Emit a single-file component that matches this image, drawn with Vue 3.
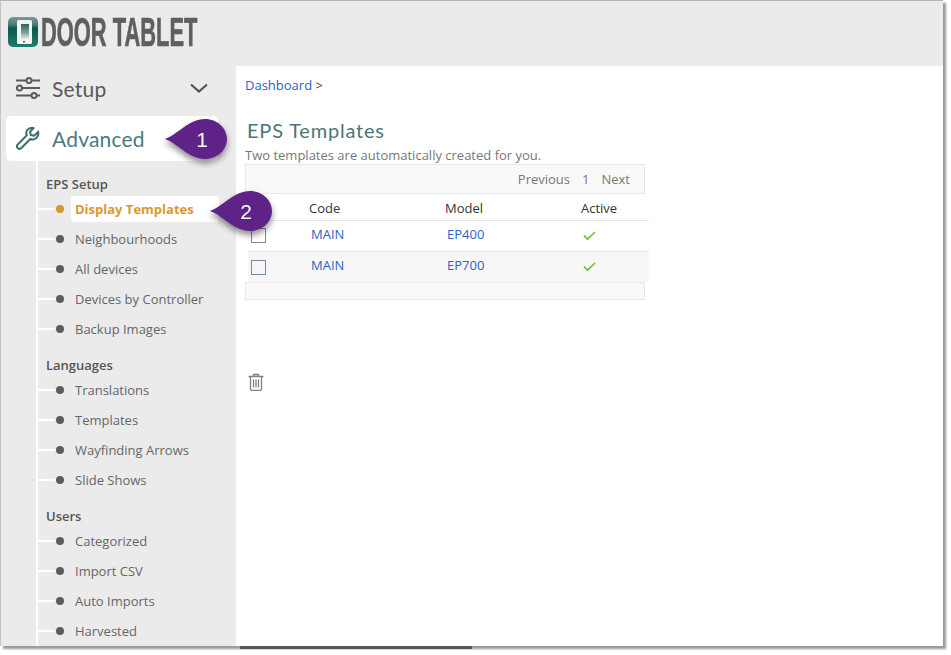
<script setup>
const groups = [
  { title: 'EPS Setup', items: ['Display Templates', 'Neighbourhoods', 'All devices', 'Devices by Controller', 'Backup Images'] },
  { title: 'Languages', items: ['Translations', 'Templates', 'Wayfinding Arrows', 'Slide Shows'] },
  { title: 'Users', items: ['Categorized', 'Import CSV', 'Auto Imports', 'Harvested'] }
]
const rows = [
  { code: 'MAIN', model: 'EP400' },
  { code: 'MAIN', model: 'EP700' }
]
const balloons = [
  { id: 'b1', label: '1' },
  { id: 'b2', label: '2' }
]
</script>

<template>
  <div class="page">
    <div class="window">
      <header class="top">
        <svg class="logo-icon" width="30" height="30" viewBox="0 0 30 30">
          <defs>
            <linearGradient id="lg" x1="0" y1="0" x2="0" y2="1">
              <stop offset="0" stop-color="#7f9a93" />
              <stop offset="0.28" stop-color="#3f7a70" />
              <stop offset="0.36" stop-color="#0e564c" />
              <stop offset="1" stop-color="#1f7d6f" />
            </linearGradient>
            <linearGradient id="lg2" x1="0" y1="0" x2="0" y2="1">
              <stop offset="0" stop-color="#24665c" />
              <stop offset="0.6" stop-color="#7fa69e" />
              <stop offset="1" stop-color="#e4ecea" />
            </linearGradient>
          </defs>
          <rect width="30" height="30" rx="5" fill="url(#lg)" />
          <rect x="9" y="3" width="15" height="24" rx="1.500" fill="#f1f4f0" />
          <rect x="13" y="7" width="8" height="15" fill="url(#lg2)" />
          <rect x="15" y="24" width="2" height="1.500" fill="#3a6f66" />
        </svg>
        <span class="logo-text">DOOR TABLET</span>
      </header>
      <div class="body">
        <aside class="side">
          <div class="nav-top">
            <svg width="24" height="22" viewBox="0 0 24 22" fill="none" stroke="#5a5a5a" stroke-width="2">
              <path d="M0 3.500h10.500M15.500 3.500h8.500M6 11h18M0 11h1M0 18.500h15.500M20.500 18.500h3.500" />
              <circle cx="13" cy="3.500" r="2.500" />
              <circle cx="3.500" cy="11" r="2.500" />
              <circle cx="18" cy="18.500" r="2.500" />
            </svg>
            <span class="nav-label">Setup</span>
            <svg class="chev" width="18" height="10" viewBox="0 0 18 10" fill="none" stroke="#555" stroke-width="2.200">
              <path d="M1 1.500l8 7 8-7" />
            </svg>
          </div>
          <div class="nav-active">
            <svg width="24" height="24" viewBox="0 0 26 26" fill="none" stroke="#3f6f6c" stroke-width="2.200" stroke-linejoin="round">
              <path d="M24 5.500l-4.500 4-3.500-.8-.8-3.500 4-4C15.500.5 11.800 2 11.200 5.500c-.2 1.300 0 2.500.5 3.500L2 18.800c-1.200 1.200-1.200 2.900-.2 4 1.100 1.100 2.900 1 4-.1l9.700-9.700c1 .5 2.200.7 3.500.5 3.500-.6 5.800-4.500 5-8.500z" />
            </svg>
            <span class="nav-label teal">Advanced</span>
          </div>
          <div class="tree">
            <section v-for="g in groups" :key="g.title" class="group">
              <h4>{{ g.title }}</h4>
              <ul>
                <li v-for="it in g.items" :key="it" :class="{ on: it === 'Display Templates' }">
                  <i class="branch"></i><i class="dot"></i><span class="item">{{ it }}</span>
                </li>
              </ul>
            </section>
          </div>
        </aside>
        <main class="main">
          <div class="crumb"><a>Dashboard</a> &gt;</div>
          <h1>EPS Templates</h1>
          <p class="sub">Two templates are automatically created for you.</p>
          <div class="pager"><span>Previous</span><span class="num">1</span><span>Next</span></div>
          <div class="thead">
            <span class="c1"></span><span class="c2">Code</span><span class="c3">Model</span><span class="c4">Active</span>
          </div>
          <div v-for="(r, i) in rows" :key="r.model" class="row" :class="{ alt: i === 1 }">
            <span class="c1"><i class="box"></i></span>
            <a class="c2 lnk">{{ r.code }}</a>
            <a class="c3 lnk">{{ r.model }}</a>
            <span class="c4">
              <svg width="13" height="11" viewBox="0 0 13 11" fill="none">
                <path d="M1 5.500l3.500 3.500L12 2" stroke="#6aae2e" stroke-width="1.700" />
                <path d="M2 5.800l2.500 2.200L11.500 2.400" stroke="#b9e58a" stroke-width="0.600" />
              </svg>
            </span>
          </div>
          <div class="foot"></div>
          <svg class="trash" width="16" height="18" viewBox="0 0 16 18" fill="none" stroke="#808080" stroke-width="1.300">
            <path d="M0.500 3.500h15M5.500 3.500V1.500h5v2M2.500 3.500v12.500a1.300 1.300 0 0 0 1.300 1.300h8.400a1.300 1.300 0 0 0 1.300-1.300V3.500" />
            <path d="M5.500 6.500v8M8 6.500v8M10.500 6.500v8" />
          </svg>
        </main>
      </div>
      <div v-for="b in balloons" :key="b.id" class="balloon" :class="b.id">
        <svg width="62" height="40" viewBox="0 0 62 40">
          <path d="M0 20C12 16 24 0 40 0C52 0 62 9 62 20C62 31 52 40 40 40C24 40 12 24 0 20Z" fill="#5f2287" />
        </svg>
        <span>{{ b.label }}</span>
      </div>
      <i class="ragged"></i>
    </div>
  </div>
</template>

<style>
html, body { margin: 0; background: #fff; }
</style>

<style scoped>
.page { width: 951px; height: 655px; overflow: hidden; background: #fff; font-family: "Open Sans", sans-serif; }
.window {
  position: relative;
  width: 943px;
  height: 646px;
  box-sizing: border-box;
  border-top: 1px solid #b4b4b4;
  border-left: 1px solid #c4c4c4;
  display: flex;
  flex-direction: column;
  background: #ebebeb;
  box-shadow: 3px 3px 2px #999;
}
.top { height: 65px; display: flex; align-items: flex-start; padding: 16px 0 0 7px; box-sizing: border-box; flex: none; }
.logo-icon { flex: none; }
.logo-text {
  font-family: "Liberation Sans", sans-serif;
  font-weight: 700;
  font-size: 40px;
  line-height: 30px;
  color: #5f5f5f;
  margin-left: 3px;
  display: inline-block;
  transform: scaleX(0.547);
  transform-origin: left center;
  white-space: nowrap;
  -webkit-text-stroke: 0.7px #5f5f5f;
}
.body { flex: 1; display: flex; min-height: 0; }
.side { width: 235px; flex: none; overflow: hidden; position: relative; }
.nav-top { height: 50px; box-sizing: border-box; padding: 0 0 6px 15px; display: flex; align-items: center; }
.nav-label { font-family: Lato, sans-serif; font-size: 21px; color: #5a5a5a; margin-left: 12px; letter-spacing: 0.2px; }
.nav-label.teal { color: #4a7a80; }
.chev { margin-left: auto; margin-right: 28px; }
.nav-active {
  height: 45px;
  width: 212px;
  margin-left: 5px;
  background: #fff;
  border-radius: 5px;
  display: flex;
  align-items: center;
  padding-left: 10px;
  box-sizing: border-box;
}
.tree { margin-left: 35px; border-left: 2px solid #fff; padding-top: 11px; height: 500px; }
.group { margin-bottom: 9px; }
.group h4 { margin: 0; padding-left: 8px; font-size: 13px; font-weight: 600; color: #555; line-height: 25px; height: 25px; }
.group ul { margin: -3px 0 0; padding: 0; list-style: none; }
.group li { height: 30px; display: flex; align-items: center; font-size: 13px; color: #666; }
.branch { width: 17px; height: 2px; background: #fff; flex: none; }
.dot { width: 8px; height: 8px; border-radius: 50%; background: #5c5c5c; flex: none; margin-left: 1px; margin-right: 7px; }
.item { padding: 4px 25px 4px 4px; border-radius: 3px; white-space: nowrap; }
.on .dot { background: #d9982f; }
.on .item { background: #fff; color: #d9982f; font-weight: 700; }
.main { flex: 1; background: #fff; padding: 10px 0 0 9px; position: relative; min-width: 0; }
.crumb { font-size: 13px; line-height: 18px; color: #444; }
.crumb a, .lnk { color: #2a62c4; }
h1 { margin: 22px 0 0 2px; font-family: Lato, sans-serif; font-weight: 400; font-size: 20px; line-height: 28px; color: #4f7478; letter-spacing: 0.8px; }
.sub { margin: 2px 0 0; font-size: 13px; line-height: 18px; color: #777; }
.pager {
  width: 400px;
  height: 30px;
  box-sizing: border-box;
  background: #f9f9f9;
  border: 1px solid #e8e8e8;
  display: flex;
  justify-content: flex-end;
  align-items: center;
  gap: 12px;
  padding-right: 14px;
  font-size: 13px;
  color: #777;
}
.thead, .row { width: 401px; margin-left: 3px; display: flex; align-items: center; font-size: 13px; box-sizing: border-box; }
.thead { height: 27px; padding-top: 1px; color: #333; border-bottom: 1px solid #e4e4e4; }
.row { height: 31px; padding-bottom: 5px; border-bottom: 1px solid #e4e4e4; }
.row.alt { height: 30px; padding-bottom: 4px; background: #f7f7f7; border-bottom: none; }
.c1 { width: 61px; flex: none; padding-left: 3px; box-sizing: border-box; }
.c2 { width: 136px; flex: none; }
.c3 { width: 136px; flex: none; }
.row .c2, .row .c3 { padding-left: 2px; box-sizing: border-box; }
.c4 svg { display: block; margin-left: 2px; margin-top: 3px; }
.box { display: block; width: 15px; height: 15px; box-sizing: border-box; border: 1px solid #7c8a9c; margin-top: 4px; }
.foot { width: 400px; height: 18px; box-sizing: border-box; background: #f9f9f9; border: 1px solid #e8e8e8; }
.trash { display: block; margin: 73px 0 0 3px; }
.balloon {
  position: absolute;
  width: 62px;
  height: 40px;
  filter: drop-shadow(0 4px 3px rgba(0, 0, 0, 0.45));
}
.balloon svg { display: block; }
.balloon span {
  position: absolute;
  left: 0;
  top: 0;
  width: 74px;
  height: 42px;
  display: flex;
  align-items: center;
  justify-content: center;
  color: #fff;
  font-family: "Liberation Sans", sans-serif;
  font-size: 21px;
}
.b1 { left: 164px; top: 118px; }
.b2 { left: 209px; top: 190px; }
.b2 span { width: 72px; }
.ragged { position: absolute; left: 239px; bottom: -3px; width: 232px; height: 3px; background: #555; }
</style>
